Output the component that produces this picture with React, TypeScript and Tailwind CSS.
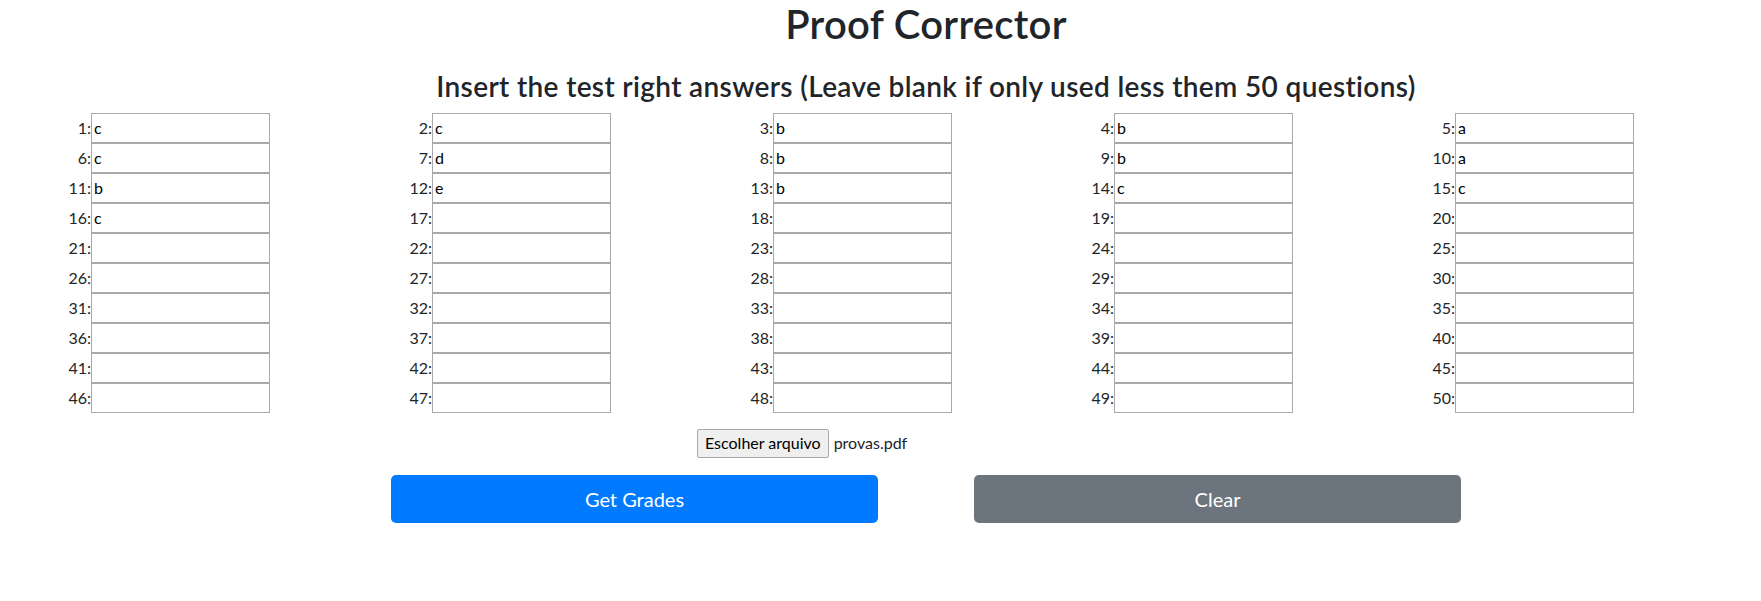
import React from "react";

const answers: Record<number, string> = {
  1: "c", 2: "c", 3: "b", 4: "b", 5: "a",
  6: "c", 7: "d", 8: "b", 9: "b", 10: "a",
  11: "b", 12: "e", 13: "b", 14: "c", 15: "c",
  16: "c",
};

const rows = Array.from({ length: 10 }, (_, r) =>
  Array.from({ length: 5 }, (_, c) => r * 5 + c + 1)
);

export default function App() {
  return (
    <div className="min-h-[601px] bg-white text-[#212529] font-['Lato','Noto_Sans',sans-serif]">
      <div className="pl-[91px] text-center">
        <h1 className="text-[40px] font-semibold leading-[1.2] tracking-[0.3px] mb-[22px]">Proof Corrector</h1>
        <h3 className="text-[28px] font-semibold leading-[1.2] tracking-[0.35px] mb-[9px]">
          Insert the test right answers (Leave blank if only used less them 50 questions)
        </h3>
      </div>

      <div className="flex flex-col pl-[61px]">
        {rows.map((row, ri) => (
          <div key={ri} className="flex gap-[132px]">
            {row.map((n) => (
              <div key={n} className="flex items-center w-[209px] h-[30px]">
                <label className="w-[30px] text-right text-[16px] leading-none">{n}:</label>
                <input
                  type="text"
                  defaultValue={answers[n] ?? ""}
                  className="w-[179px] h-[30px] border border-[#a9a9a9] bg-white px-[2px] text-[16px] text-black outline-none font-['Lato','Noto_Sans',sans-serif]"
                />
              </div>
            ))}
          </div>
        ))}
      </div>

      <div className="flex justify-center pl-[91px] mt-[16px]">
        <div className="w-[458px] flex items-center">
          <span className="h-[29px] px-[7px] flex items-center border border-[#a9a9a9] rounded-[2px] bg-[#efefef] text-[16px] text-black">
            Escolher arquivo
          </span>
          <span className="ml-[5px] text-[16px] text-[#212529]">provas.pdf</span>
        </div>
      </div>

      <div className="flex justify-center gap-[96px] pl-[91px] mt-[17px]">
        <button className="w-[487px] h-[48px] rounded-[5px] bg-[#007bff] text-white text-[20px]">
          Get Grades
        </button>
        <button className="w-[487px] h-[48px] rounded-[5px] bg-[#6c757d] text-white text-[20px]">
          Clear
        </button>
      </div>
    </div>
  );
}
